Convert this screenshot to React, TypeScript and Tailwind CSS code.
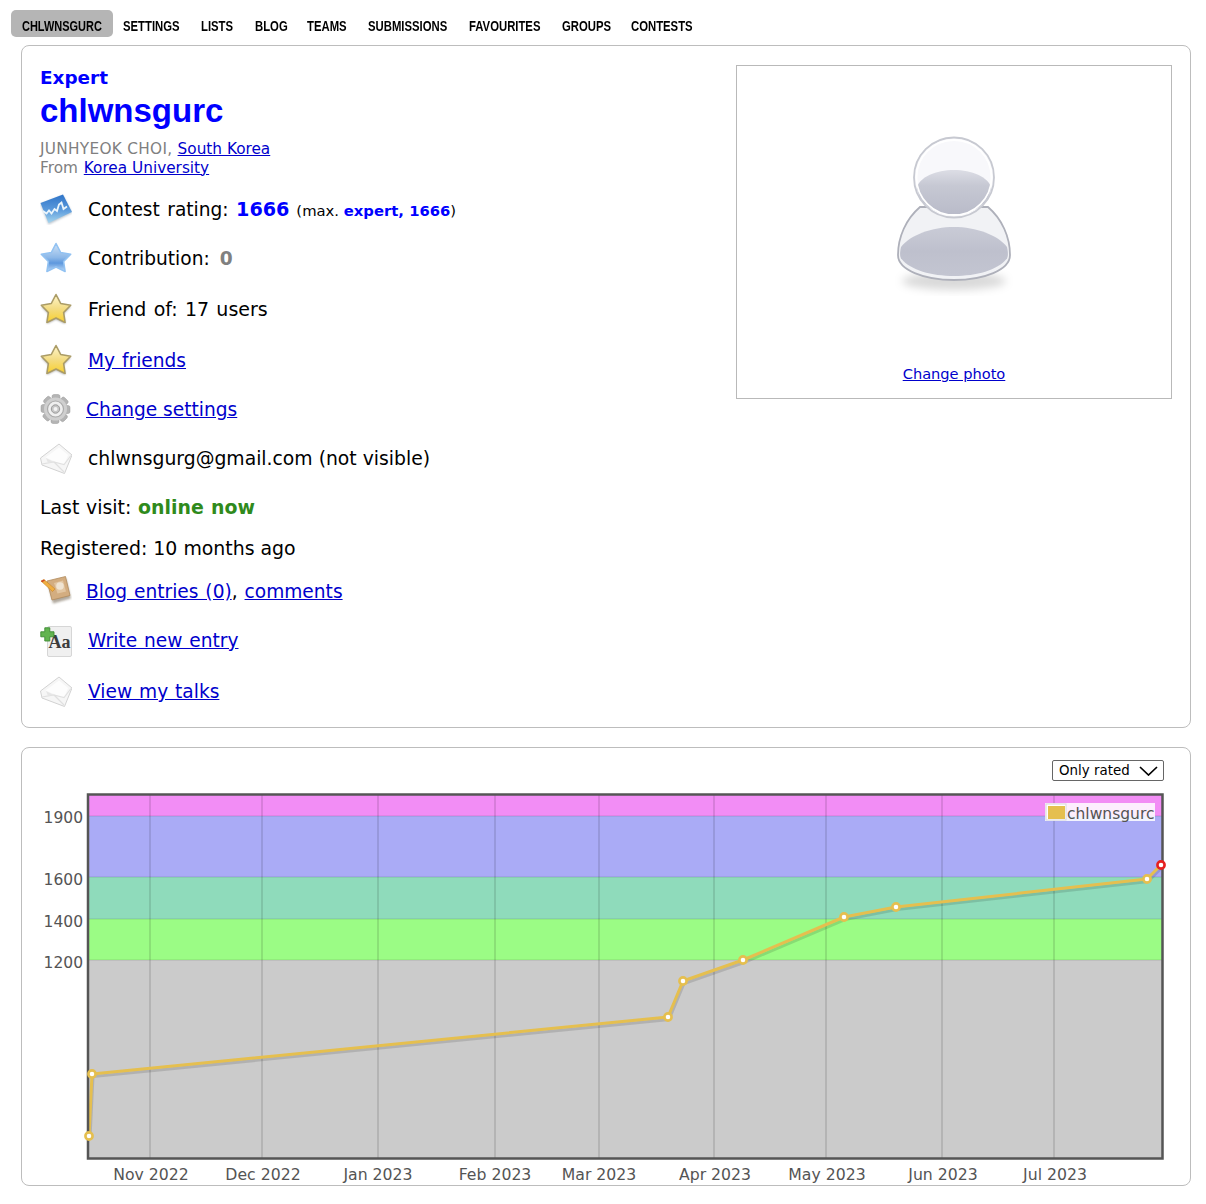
import React from "react";

const dj = "font-['DejaVu_Sans',Verdana,sans-serif]";
const link = "text-[#0000cc] underline";

function Defs() {
  return (
    <svg width="0" height="0" className="absolute">
      <defs>
        <linearGradient id="gy" x1="0" y1="0" x2="0" y2="1">
          <stop offset="0" stopColor="#fff6cc" />
          <stop offset="0.5" stopColor="#f3dc84" />
          <stop offset="1" stopColor="#f9d02c" />
        </linearGradient>
        <linearGradient id="gb" x1="0" y1="0" x2="0" y2="1">
          <stop offset="0" stopColor="#cfe2f6" />
          <stop offset="0.5" stopColor="#8db8e8" />
          <stop offset="0.7" stopColor="#5d98de" />
          <stop offset="1" stopColor="#c0dcf8" />
        </linearGradient>
        <linearGradient id="gr" x1="0" y1="0" x2="0" y2="1">
          <stop offset="0" stopColor="#2f74c8" />
          <stop offset="0.55" stopColor="#5c9bdc" />
          <stop offset="1" stopColor="#a6d6ee" />
        </linearGradient>
        <linearGradient id="gh" x1="0" y1="0" x2="0" y2="1">
          <stop offset="0" stopColor="#dcdde5" />
          <stop offset="0.35" stopColor="#c6c8d3" />
          <stop offset="1" stopColor="#b9bbc9" />
        </linearGradient>
        <linearGradient id="gbd" x1="0" y1="0" x2="0" y2="1">
          <stop offset="0" stopColor="#c9cbd6" />
          <stop offset="0.5" stopColor="#bec0cd" />
          <stop offset="1" stopColor="#c3c5d1" />
        </linearGradient>
        <filter id="soft" x="-30%" y="-30%" width="160%" height="160%">
          <feGaussianBlur stdDeviation="4" />
        </filter>
        <filter id="s1" x="-20%" y="-20%" width="140%" height="140%">
          <feGaussianBlur stdDeviation="0.8" />
        </filter>
        <filter id="s2" x="-5%" y="-5%" width="110%" height="110%">
          <feGaussianBlur stdDeviation="0.5" />
        </filter>
      </defs>
    </svg>
  );
}

const starPath = "M16 1.500L20.700 10.500 30.700 12.200 23.600 19.500 25.100 29.500 16 25 6.900 29.500 8.400 19.500 1.300 12.200 11.300 10.500z";

function Star({ blue }: { blue?: boolean }) {
  return (
    <svg width="32" height="32" viewBox="0 0 32 32">
      {!blue && <path d={starPath} transform="translate(0 1.200)" fill="#00000060" filter="url(#s1)" />}
      <path
        d={starPath}
        fill={blue ? "url(#gb)" : "url(#gy)"}
        stroke={blue ? "#92c2f2" : "#ab9c66"}
        strokeWidth="1.600"
        strokeLinejoin="round"
      />
    </svg>
  );
}

function RatingIcon() {
  return (
    <svg width="32" height="32" viewBox="0 0 32 32">
      <path d="M0.500 10L23 1.500 32 19 8.500 30.500z" fill="#9aa9b8" opacity=".7" transform="translate(0 1)" filter="url(#s1)" />
      <path d="M0.500 10L23 1.500 32 19 8.500 30z" fill="url(#gr)" />
      <path d="M3 18l3.500 2.500 2.500-3 2.500 3 3-4.500 2.500 2 2-6.500 2.500-2 2 6.500 3.500-2.500" fill="none" stroke="#eaf5fc" strokeWidth="1.800" />
    </svg>
  );
}

function GearIcon() {
  const teeth = [0, 45, 90, 135, 180, 225, 270, 315];
  return (
    <svg width="32" height="32" viewBox="0 0 32 32">
      {teeth.map((a) => (
        <rect key={a} x="12" y="1.500" width="8" height="8" rx="2" fill="#b4b4b4" stroke="#999" strokeWidth=".5" transform={`rotate(${a} 15.500 16)`} />
      ))}
      <circle cx="15.500" cy="16" r="11.500" fill="#cfcfcf" />
      <circle cx="15.500" cy="16" r="8" fill="#efefef" stroke="#ababab" strokeWidth="1.200" />
      <circle cx="15.500" cy="16" r="4.200" fill="#c6c6c6" stroke="#9a9a9a" strokeWidth="1" />
      <circle cx="15.500" cy="16" r="2" fill="#f4f4f4" />
    </svg>
  );
}

function MailIcon() {
  return (
    <svg width="32" height="34" viewBox="0 0 32 34">
      <path d="M0.500 16L19 2 32 13 24.500 31.500 2 23z" fill="#f6f6f6" stroke="#d2d2d2" strokeWidth="1" strokeLinejoin="round" />
      <path d="M5.500 15.500L19 5.500 28 13 24 23z" fill="#fdfdfd" />
      <path d="M2 22l12-2 10 10M14 20l10 2.500 7-9" fill="none" stroke="#e0e0e0" strokeWidth="1.200" />
      <path d="M6 16l8 4-6 1z" fill="#e6e6e6" />
    </svg>
  );
}

function BlogIcon() {
  return (
    <svg width="32" height="32" viewBox="0 0 32 32">
      <path d="M8 7L26 2 31 22 13 27z" fill="#8f8474" opacity=".7" transform="translate(0 1.500)" filter="url(#s1)" />
      <path d="M7 6L25.500 1.500 30 20.500 12 25z" fill="#d3ad80" stroke="#b18c5e" strokeWidth=".8" />
      <path d="M14 8l9-2.500 3 11-8.500 2z" fill="#e2c6a2" />
      <circle cx="20" cy="11" r="3.800" fill="#f0e4d2" />
      <path d="M1 6l3-1.500L15 14l-2.500 2.500z" fill="#efae42" stroke="#c98424" strokeWidth=".6" />
      <path d="M1 6l3-1.500 1 1-3 1.800z" fill="#cc4422" />
    </svg>
  );
}

function WriteIcon() {
  return (
    <div className="relative w-[32px] h-[34px]">
      <div className="absolute left-[7px] top-[2px] w-[25px] h-[31px] bg-[#f0f0f0] border border-[#d6d6d6] rounded-[2px] flex items-end justify-center pb-[5px]">
        <span className="font-['Liberation_Serif',serif] font-bold text-[18px] leading-none text-[#3c3c3c]">Aa</span>
      </div>
      <svg className="absolute left-0 top-[3px]" width="15" height="15" viewBox="0 0 15 15">
        <path d="M4.800 .8h5v4h4.200v5H9.800v4.200h-5V9.800H.8v-5h4z" fill="#62b450" stroke="#3c8a32" strokeWidth=".9" strokeLinejoin="round" />
      </svg>
    </div>
  );
}

function Row({ icon, className, children }: { icon: React.ReactNode; className?: string; children: React.ReactNode }) {
  return (
    <div className={`flex items-center h-[32px] ${className ?? ""}`}>
      <div className="w-[32px] h-[32px] shrink-0">{icon}</div>
      <div className="ml-[16px] pt-[2px] text-[18.600px] leading-[24px] text-black whitespace-nowrap [word-spacing:1px]">{children}</div>
    </div>
  );
}

function Avatar() {
  return (
    <svg width="120" height="170" viewBox="0 0 120 170">
      <ellipse cx="60" cy="146" rx="52" ry="9" fill="#00000026" filter="url(#soft)" />
      <g filter="url(#s2)">
        <path d="M26 72C12 84 4 102 4 120c0 15 26 25 56 25s56-10 56-25c0-18-8-36-22-48z" fill="#f1f2f5" stroke="#aeb0ba" strokeWidth="1.800" />
        <path d="M7 112C16 100 38 92 60 92s44 8 53 20c1.500 7 1 10-.5 12-9 11-30 17-52.500 17s-43.500-6-52.500-17c-1.500-2-2-5-.5-12z" fill="url(#gbd)" />
        <circle cx="60" cy="42.500" r="40" fill="#f8f8fb" stroke="#c7c9d1" strokeWidth="1.800" />
        <path d="M23 52C26 42 42 35 60 35s34 7 37 17c-1 16-18 28-37 28S24 68 23 52z" fill="url(#gh)" />
        <circle cx="60" cy="42.500" r="37.500" fill="none" stroke="#ffffff" strokeWidth="1.800" />
      </g>
    </svg>
  );
}

const bands = [
  { y: 795, h: 21, c: "#f28df5" },
  { y: 816, h: 61, c: "#aaabf6" },
  { y: 877, h: 42, c: "#8fdbbb" },
  { y: 919, h: 41, c: "#9bfc85" },
  { y: 960, h: 198, c: "#cbcbcb" },
];
const grid = [150, 262, 378, 495, 599, 714, 826, 942, 1054];
const xlabels = [
  ["Nov 2022", 151],
  ["Dec 2022", 263],
  ["Jan 2023", 378],
  ["Feb 2023", 495],
  ["Mar 2023", 599],
  ["Apr 2023", 715],
  ["May 2023", 827],
  ["Jun 2023", 943],
  ["Jul 2023", 1055],
] as const;
const ylabels = [
  ["1900", 823],
  ["1600", 885],
  ["1400", 927],
  ["1200", 968],
] as const;
const pts = [
  [89, 1136],
  [92, 1074],
  [668, 1017],
  [683, 981],
  [743, 960],
  [844, 917],
  [896, 907],
  [1147, 879],
  [1161, 865],
];
const line = pts.map((p) => p.join(",")).join(" ");
const linesh = pts.map((p) => `${p[0] + 1},${p[1] + 2.5}`).join(" ");

function Chart() {
  const ff = "'DejaVu Sans',Verdana,sans-serif";
  return (
    <svg className="block mt-[7px]" width="1168" height="397" viewBox="22 788 1168 397">
      {bands.map((b) => (
        <rect key={b.y} x="88" y={b.y} width="1075" height={b.h} fill={b.c} />
      ))}
      {[816, 877, 919, 960].map((y) => (
        <line key={y} x1="88" x2="1163" y1={y} y2={y} stroke="#00000020" strokeWidth="1" />
      ))}
      {grid.map((x) => (
        <line key={x} x1={x} x2={x} y1="795" y2="1158" stroke="#0000001c" strokeWidth="2" />
      ))}
      <polyline points={linesh} fill="none" stroke="#00000020" strokeWidth="3" />
      <polyline points={line} fill="none" stroke="#e5bf4f" strokeWidth="3" strokeLinejoin="round" />
      <rect x="88" y="794.500" width="1074.500" height="364" fill="none" stroke="#555555" strokeWidth="2.500" />
      {pts.map((p, i) => {
        const last = i === pts.length - 1;
        return <circle key={i} cx={p[0]} cy={p[1]} r="3.600" fill="#fff" stroke={last ? "#e62020" : "#e5bf4f"} strokeWidth="2.600" />;
      })}
      <rect x="1045" y="803" width="110" height="18" fill="#ffffff" opacity=".85" />
      <rect x="1046" y="804" width="20" height="16" fill="#fff" stroke="#d8d8d8" strokeWidth="1" />
      <rect x="1048" y="806" width="17" height="13" fill="#e5bf4f" />
      <text x="1067" y="819" fontFamily={ff} fontSize="15.500" fill="#545454">chlwnsgurc</text>
      {ylabels.map(([t, y]) => (
        <text key={t} x="83" y={y} textAnchor="end" fontFamily={ff} fontSize="15.500" fill="#545454">{t}</text>
      ))}
      {xlabels.map(([t, x]) => (
        <text key={t} x={x} y="1180" textAnchor="middle" fontFamily={ff} fontSize="15.700" fill="#545454">{t}</text>
      ))}
    </svg>
  );
}

function NavLabel({ text, w }: { text: string; w: string }) {
  return (
    <span className={`inline-block whitespace-nowrap ${w}`}>
      <span className="inline-block origin-left scale-x-[.73]">{text}</span>
    </span>
  );
}

export default function App() {
  return (
    <div className={`w-[1206px] h-[1204px] bg-white overflow-hidden ${dj}`}>
      <Defs />
      <nav className="flex items-center pl-[11px] pt-[10px] h-[37px] font-['Liberation_Sans',Arial,sans-serif] font-bold text-[15.500px] text-black">
        <span className="h-[27px] leading-[31px] px-[11px] bg-[#b5b5b5] rounded-[5px]">
          <span className="inline-block w-[80px] whitespace-nowrap">
            <span className="inline-block origin-left scale-x-[.708]">CHLWNSGURC</span>
          </span>
        </span>
        <span className="h-[27px] leading-[31px] pl-[10px] pr-[9.500px]"><NavLabel text="SETTINGS" w="w-[58px]" /></span>
        <span className="h-[27px] leading-[31px] px-[10.500px]"><NavLabel text="LISTS" w="w-[33px]" /></span>
        <span className="h-[27px] leading-[31px] px-[10.500px]"><NavLabel text="BLOG" w="w-[31px]" /></span>
        <span className="h-[27px] leading-[31px] px-[10.500px]"><NavLabel text="TEAMS" w="w-[40px]" /></span>
        <span className="h-[27px] leading-[31px] px-[10.500px]"><NavLabel text="SUBMISSIONS" w="w-[80px]" /></span>
        <span className="h-[27px] leading-[31px] px-[10.500px]"><NavLabel text="FAVOURITES" w="w-[72px]" /></span>
        <span className="h-[27px] leading-[31px] px-[10.500px]"><NavLabel text="GROUPS" w="w-[48px]" /></span>
        <span className="h-[27px] leading-[31px] px-[10.500px]"><NavLabel text="CONTESTS" w="w-[61px]" /></span>
      </nav>

      <section className="mt-[8px] ml-[21px] w-[1170px] h-[683px] border border-[#bdbdbd] rounded-[8px] relative pl-[18px] pt-[20px]">
        <div className="absolute left-[714px] top-[19px] w-[436px] h-[334px] border border-[#b9b9b9] flex flex-col items-center">
          <div className="mt-[69px]"><Avatar /></div>
          <a className={`${link} mt-[60px] text-[14.600px] leading-[18px]`}>Change photo</a>
        </div>

        <div className="text-[#0000ff] font-bold text-[18.400px] leading-[24px]">Expert</div>
        <div className="text-[#0000ff] font-['Liberation_Sans',Arial,sans-serif] font-bold text-[33px] leading-[40px] mt-[1px]">chlwnsgurc</div>
        <div className="text-[15.300px] leading-[19px] text-[#808080] mt-[8.500px]">
          <span className="tracking-[.3px]">JUNHYEOK CHOI, </span><a className={link}>South Korea</a>
          <br />
          <span className="[word-spacing:1px]">From </span><a className={link}>Korea University</a>
        </div>

        <Row icon={<RatingIcon />} className="mt-[15.500px]">
          <span className="[word-spacing:1.500px]">Contest rating: </span><span className="text-[#0000ff] font-bold text-[19.200px]">1666</span>{" "}
          <span className="text-[14.800px] [word-spacing:0px]">(max. <span className="text-[#0000ff] font-bold">expert, 1666</span>)</span>
        </Row>
        <Row icon={<Star blue />} className="mt-[17px]">
          <span className="[word-spacing:4px]">Contribution: </span><span className="text-[#808080] font-bold">0</span>
        </Row>
        <Row icon={<Star />} className="mt-[19px]"><span className="inline-block mt-[-2px] text-[19px] [word-spacing:1.200px]">Friend of: 17 users</span></Row>
        <Row icon={<Star />} className="mt-[19px]"><a className={link}>My friends</a></Row>
        <Row icon={<GearIcon />} className="mt-[17px]"><a className={`${link} ml-[-2px] [word-spacing:0px]`}>Change settings</a></Row>
        <Row icon={<MailIcon />} className="mt-[17px]"><span className="text-[18.800px] [word-spacing:0px]">chlwnsgurg@gmail.com (not visible)</span></Row>

        <div className="text-[18.900px] leading-[24px] text-black mt-[21px] [word-spacing:.7px]">
          Last visit: <span className="text-[#2f8a1c] font-bold">online now</span>
        </div>
        <div className="text-[18.900px] leading-[24px] text-black mt-[17px]">Registered: 10 months ago</div>

        <Row icon={<BlogIcon />} className="mt-[15px]">
          <a className={`${link} ml-[-2px]`}>Blog entries (0)</a>, <a className={link}>comments</a>
        </Row>
        <Row icon={<WriteIcon />} className="mt-[17px]"><a className={link}>Write new entry</a></Row>
        <Row icon={<MailIcon />} className="mt-[19px]"><a className={link}>View my talks</a></Row>
      </section>

      <section className="mt-[19px] ml-[21px] w-[1170px] h-[439px] border border-[#bdbdbd] rounded-[8px] overflow-hidden">
        <div className="flex justify-end pt-[12px] pr-[26px]">
          <div className="w-[112px] h-[21px] border border-[#666] rounded-[2px] flex items-center justify-between pl-[6px] pr-[5px] text-[13.400px] text-black">
            <span className="pt-[1px]">Only rated</span>
            <svg width="19" height="10" viewBox="0 0 19 10"><path d="M1 1l8.500 8L18 1" fill="none" stroke="#000" strokeWidth="1.700" /></svg>
          </div>
        </div>
        <Chart />
      </section>
    </div>
  );
}
